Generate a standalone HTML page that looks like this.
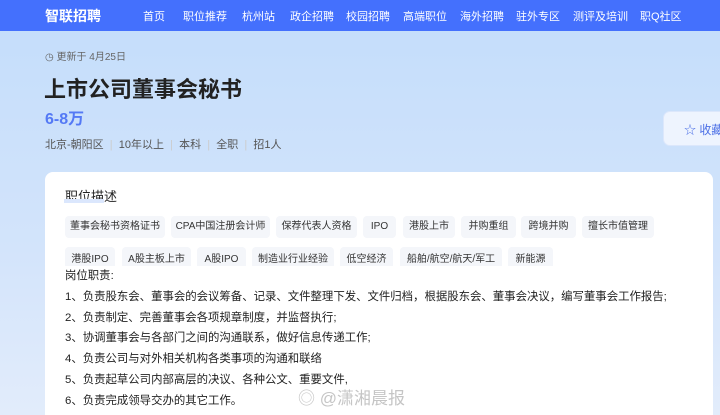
<!DOCTYPE html>
<html><head><meta charset="utf-8"><style>
*{margin:0;padding:0;box-sizing:border-box}
html{width:720px;height:415px;overflow:hidden}
body{width:720px;height:415px;overflow:hidden;font-family:"Liberation Sans","Noto Sans CJK SC",sans-serif;background:linear-gradient(180deg,#c3ddfb 0%,#d3e4fb 60%,#e2ecfb 100%);position:relative;color:#222}
.nav{position:absolute;left:0;top:0;width:720px;height:31px;background:#4470fd;color:#fff;font-size:11px}
.nav span{position:absolute;top:8px;white-space:nowrap}
.logo{font-size:14px;font-weight:bold;top:6px!important}
.a{position:absolute;white-space:nowrap}
.card{position:absolute;left:45px;top:172px;width:668px;height:243px;background:#fff;border-radius:8px 8px 0 0}
.tag{position:absolute;height:22px;background:#f4f6fa;border-radius:4px;font-size:10px;color:#333;text-align:center;line-height:22px;white-space:nowrap}
.ln{position:absolute;left:65px;font-size:11.4px;color:#222;white-space:nowrap;line-height:16px}
</style></head><body>
<div class="nav">
<span class="logo" style="left:45px">智联招聘</span>
<span style="left:143px">首页</span><span style="left:183px">职位推荐</span><span style="left:242px">杭州站</span><span style="left:290px">政企招聘</span><span style="left:346px">校园招聘</span><span style="left:403px">高端职位</span><span style="left:460px">海外招聘</span><span style="left:516px">驻外专区</span><span style="left:573px">测评及培训</span><span style="left:640px">职Q社区</span>
</div>
<div class="a" style="left:45px;top:48px;font-size:10px;color:#666">&#9719; 更新于 4月25日</div>
<div class="a" style="left:44px;top:72px;font-size:22px;font-weight:bold;color:#222">上市公司董事会秘书</div>
<div class="a" style="left:45px;top:105px;font-size:16px;font-weight:bold;color:#5479f5">6-8万</div>
<div class="a" style="left:45px;top:136px;font-size:11px;color:#555">北京-朝阳区 <span style="color:#ccc">&nbsp;|&nbsp;</span> 10年以上 <span style="color:#ccc">&nbsp;|&nbsp;</span> 本科 <span style="color:#ccc">&nbsp;|&nbsp;</span> 全职 <span style="color:#ccc">&nbsp;|&nbsp;</span> 招1人</div>
<div class="a" style="left:663px;top:111px;width:70px;height:35px;background:#eef4fe;border:1px solid #dce7fb;border-radius:7px;font-size:12px;color:#4b6fe6;padding:9px 0 0 20px">☆ 收藏</div>
<div class="card"></div>
<div class="a" style="left:65px;top:186px;font-size:13px;color:#222">职位描述</div>
<div class="a" style="left:64px;top:199px;width:40px;height:4px;background:#dbe7fd"></div>
<div class="tag" style="left:65px;top:216px;width:100px">董事会秘书资格证书</div>
<div class="tag" style="left:171px;top:216px;width:99px">CPA中国注册会计师</div>
<div class="tag" style="left:276px;top:216px;width:81px">保荐代表人资格</div>
<div class="tag" style="left:363px;top:216px;width:33px">IPO</div>
<div class="tag" style="left:403px;top:216px;width:52px">港股上市</div>
<div class="tag" style="left:461px;top:216px;width:55px">并购重组</div>
<div class="tag" style="left:521px;top:216px;width:55px">跨境并购</div>
<div class="tag" style="left:582px;top:216px;width:72px">擅长市值管理</div>
<div style="position:absolute;left:0;top:247px;width:720px;height:19px;overflow:hidden">
<div class="tag" style="left:65px;top:0;width:50px;line-height:26px">港股IPO</div>
<div class="tag" style="left:122px;top:0;width:69px;line-height:26px">A股主板上市</div>
<div class="tag" style="left:197px;top:0;width:49px;line-height:26px">A股IPO</div>
<div class="tag" style="left:252px;top:0;width:82px;line-height:26px">制造业行业经验</div>
<div class="tag" style="left:340px;top:0;width:53px;line-height:26px">低空经济</div>
<div class="tag" style="left:400px;top:0;width:102px;line-height:26px">船舶/航空/航天/军工</div>
<div class="tag" style="left:508px;top:0;width:45px;line-height:26px">新能源</div>
</div>
<div class="ln" style="top:268px">岗位职责:</div>
<div class="ln" style="top:289px">1、负责股东会、董事会的会议筹备、记录、文件整理下发、文件归档，根据股东会、董事会决议，编写董事会工作报告;</div>
<div class="ln" style="top:310px">2、负责制定、完善董事会各项规章制度，并监督执行;</div>
<div class="ln" style="top:330px">3、协调董事会与各部门之间的沟通联系，做好信息传递工作;</div>
<div class="ln" style="top:351px">4、负责公司与对外相关机构各类事项的沟通和联络</div>
<div class="ln" style="top:372px">5、负责起草公司内部高层的决议、各种公文、重要文件,</div>
<div class="ln" style="top:393px">6、负责完成领导交办的其它工作。</div>
<div class="a" style="left:298px;top:384px;font-size:17px;color:#bbb;opacity:.85">◎ @潇湘晨报</div>
</body></html>
